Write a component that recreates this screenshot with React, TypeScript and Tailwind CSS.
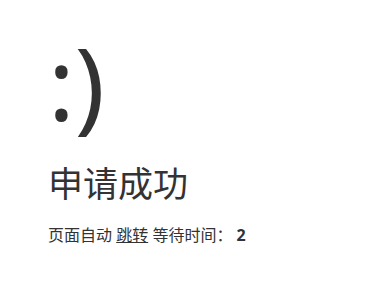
export default function App() {
  return (
    <div
      className="bg-white text-[#333] px-12 py-6"
      style={{ fontFamily: '"Noto Sans", "Noto Sans CJK SC", sans-serif' }}
    >
      <h1 className="text-[100px] font-normal leading-[116px] mb-3">:)</h1>
      <p className="text-[35px] leading-[1.8em]">申请成功</p>
      <p className="pt-2 text-[16px]">
        页面自动{" "}
        <a href="#" className="text-[#333] underline">
          跳转
        </a>{" "}
        等待时间： <b>2</b>
      </p>
    </div>
  );
}
